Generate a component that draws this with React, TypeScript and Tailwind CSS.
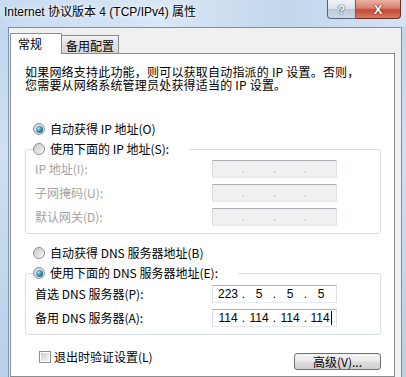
import React, { Fragment } from "react";

function Radio({ checked }: { checked?: boolean }) {
  return (
    <span className="inline-flex w-[12px] h-[12px] shrink-0 items-center justify-center rounded-full border border-[#8c8c8c] bg-[linear-gradient(135deg,#d2d2d2,#f7f7f7)]">
      {checked ? (
        <span className="w-[7px] h-[7px] rounded-full bg-[radial-gradient(circle_at_35%_35%,#a6e0f4,#2a7ea6_55%,#0f3d58)]" />
      ) : (
        <span className="w-[8px] h-[8px] rounded-full bg-[linear-gradient(135deg,#c9c9c9,#f4f4f4)]" />
      )}
    </span>
  );
}

function IpField({
  values,
  disabled,
  cursor,
}: {
  values?: string[];
  disabled?: boolean;
  cursor?: boolean;
}) {
  return (
    <div
      className={`flex h-[18px] w-[125px] pl-[1px] border border-[#abadb3] border-l-[#dbdfe6] border-r-[#dbdfe6] border-b-[#e3e9ef] font-['Liberation_Sans',sans-serif] text-[12px] leading-[16px] ${
        disabled ? "bg-[#f0f0f0] text-[#b0b0b0]" : "bg-white text-black"
      }`}
    >
      {[0, 1, 2, 3].map((i) => (
        <Fragment key={i}>
          <span className="flex w-[28px] justify-center">
            {values ? values[i] : ""}
            {cursor && i === 3 ? <span className="ml-[1px] mt-[1px] h-[14px] w-[1px] bg-black" /> : null}
          </span>
          {i < 3 ? <span className="flex w-[3px] justify-center">.</span> : null}
        </Fragment>
      ))}
    </div>
  );
}

export default function App() {
  return (
    <div className="flex h-[377px] w-[406px] flex-col overflow-hidden bg-[linear-gradient(180deg,#bcd4ee_0%,#cfe0f3_40%,#b8cfe8_100%)] font-['Noto_Sans_CJK_SC',sans-serif] text-[12px] text-black">
      {/* title bar */}
      <div className="flex h-[27px] shrink-0 items-start bg-[linear-gradient(90deg,#c6dbf1,#d9e7f6_40%,#c3d6ec_70%,#d3e3f4)]">
        <span className="ml-[4px] mt-[4px] font-['Liberation_Sans','Noto_Sans_CJK_SC',sans-serif] text-[12px] leading-[16px] [text-shadow:0_0_6px_#ffffff,0_0_3px_#ffffff]">
          Internet 协议版本 4 (TCP/IPv4) 属性
        </span>
        <div className="ml-auto mr-[5px] flex">
          <div className="flex h-[19px] w-[29px] items-center justify-center rounded-bl-[4px] border border-t-0 border-[#52647d] bg-[linear-gradient(180deg,#f0f3f7_0%,#d9e0ea_48%,#bcc6d4_52%,#d0d8e4_100%)]">
            <span className="font-['Liberation_Sans',sans-serif] text-[13px] font-bold leading-[13px] text-white [text-shadow:0_0_1px_#3d4d63,0_0_1px_#3d4d63,0_0_1px_#3d4d63]">
              ?
            </span>
          </div>
          <div className="flex h-[19px] w-[45px] items-center justify-center rounded-br-[4px] border border-l-0 border-t-0 border-[#6e2a22] bg-[linear-gradient(180deg,#eab1a5_0%,#d8806f_45%,#c54a36_55%,#d77a63_100%)]">
            <span className="font-['Liberation_Sans',sans-serif] text-[13px] font-bold leading-[13px] text-white [text-shadow:0_0_1px_#5a1c14,0_0_1px_#5a1c14,0_0_1px_#5a1c14]">
              X
            </span>
          </div>
        </div>
      </div>

      {/* window body */}
      <div className="flex flex-1">
        <div className="w-[8px] shrink-0" />
        <div className="flex flex-1 flex-col border border-b-0 border-[#7d8ea6] bg-[#f0f0f0]">
          {/* tabs */}
          <div className="ml-[1px] mt-[5px] flex h-[20px] items-end">
            <div className="relative z-10 -mb-[1px] h-[21px] w-[52px] border border-b-0 border-[#898c95] bg-white pl-[7px] pt-[2px] text-[12px] leading-[15px]">
              常规
            </div>
            <div className="-ml-[1px] h-[18px] w-[58px] border border-b-0 border-[#898c95] bg-[linear-gradient(180deg,#f3f3f3,#e1e1e1_50%,#d6d6d6)] pl-[4px] pt-[2px] text-[12px] leading-[15px]">
              备用配置
            </div>
          </div>

          {/* tab panel */}
          <div className="ml-[1px] mr-[6px] flex flex-1 flex-col border border-[#898c95] bg-white">
            <div className="ml-[14px] mt-[11px] flex flex-col text-[12px] leading-[13px] tracking-[0.2px]">
              <div className="h-[13px]">如果网络支持此功能，则可以获取自动指派的 IP 设置。否则，</div>
              <div className="h-[13px]">您需要从网络系统管理员处获得适当的 IP 设置。</div>
            </div>

            <div className="ml-[22px] mt-[31px] flex h-[14px] items-center gap-[5px] leading-[14px]">
              <Radio checked />
              <span>自动获得 IP 地址(O)</span>
            </div>

            <fieldset className="ml-[14px] mt-[6px] w-[356px] rounded-[3px] border border-[#d5dfe5] pb-[7px] pl-[7px]">
              <legend className="flex h-[14px] items-center gap-[5px] pr-[20px] leading-[14px]">
                <Radio />
                <span>使用下面的 IP 地址(S):</span>
              </legend>
              <div className="mt-[4px] flex flex-col gap-[6px] text-[#a3a3a3]">
                <div className="flex items-center">
                  <span className="w-[179px] pl-[2px]">IP 地址(I):</span>
                  <IpField disabled />
                </div>
                <div className="flex items-center">
                  <span className="w-[179px] pl-[2px]">子网掩码(U):</span>
                  <IpField disabled />
                </div>
                <div className="flex items-center">
                  <span className="w-[179px] pl-[2px]">默认网关(D):</span>
                  <IpField disabled />
                </div>
              </div>
            </fieldset>

            <div className="ml-[22px] mt-[12px] flex h-[14px] items-center gap-[5px] leading-[14px]">
              <Radio />
              <span>自动获得 DNS 服务器地址(B)</span>
            </div>

            <fieldset className="ml-[14px] mt-[6px] w-[356px] rounded-[3px] border border-[#d5dfe5] pb-[7px] pl-[7px]">
              <legend className="flex h-[14px] items-center gap-[5px] pr-[20px] leading-[14px]">
                <Radio checked />
                <span>使用下面的 DNS 服务器地址(E):</span>
              </legend>
              <div className="mt-[5px] flex flex-col gap-[6px]">
                <div className="flex items-center">
                  <span className="w-[179px] pl-[2px]">首选 DNS 服务器(P):</span>
                  <IpField values={["223", "5", "5", "5"]} />
                </div>
                <div className="flex items-center">
                  <span className="w-[179px] pl-[2px]">备用 DNS 服务器(A):</span>
                  <IpField values={["114", "114", "114", "114"]} cursor />
                </div>
              </div>
            </fieldset>

            <div className="mr-[13px] mt-[15px] flex items-start">
              <div className="ml-[28px] flex h-[14px] items-center gap-[3px] leading-[14px]">
                <span className="flex h-[12px] w-[12px] items-center justify-center border border-[#8e8f8f] bg-white">
                  <span className="h-[8px] w-[8px] bg-[linear-gradient(135deg,#cbcfd5,#f2f3f5)]" />
                </span>
                <span>退出时验证设置(L)</span>
              </div>
              <div className="ml-auto mt-[3px] flex h-[17px] w-[87px] items-center justify-center rounded-[3px] border border-[#707070] bg-[linear-gradient(180deg,#f2f2f2_0%,#ebebeb_48%,#dddddd_52%,#cfcfcf_100%)] leading-[14px]">
                高级(V)...
              </div>
            </div>
          </div>
        </div>
        <div className="w-[4px] shrink-0" />
      </div>
    </div>
  );
}
